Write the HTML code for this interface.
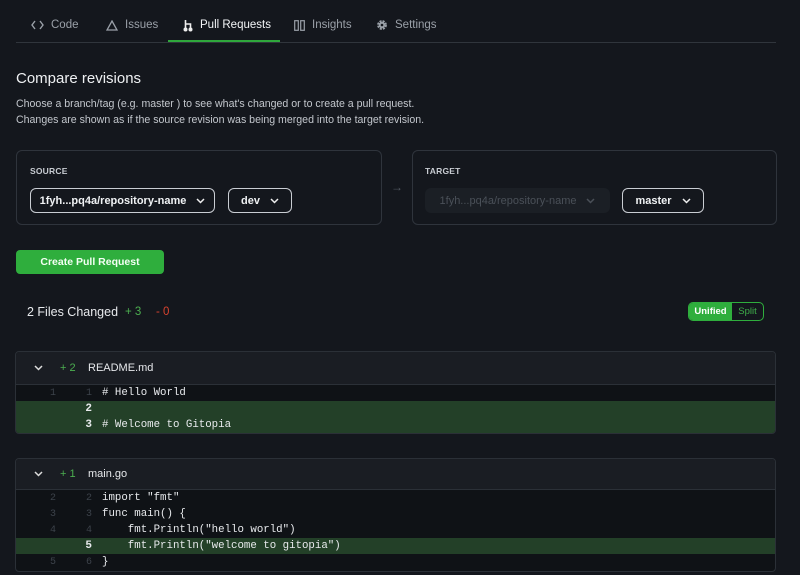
<!DOCTYPE html>
<html><head><meta charset="utf-8"><style>
*{margin:0;padding:0;box-sizing:border-box}
body{width:800px;height:575px;background:#14171d;color:#e6e8eb;font-family:"Liberation Sans",sans-serif;position:relative;overflow:hidden}
.a{position:absolute}
.tab{position:absolute;top:18px;font-size:11.5px;color:#9aa0a8;display:flex;align-items:center;gap:7px;height:14px}
.box{position:absolute;border:1px solid #2f343c;border-radius:6px}
.lbl{font-size:8.5px;font-weight:bold;color:#c8ccd2;letter-spacing:.2px}
.dd{position:absolute;height:25px;border:1px solid #c9cdd3;border-radius:6px;font-size:11px;font-weight:bold;display:flex;align-items:center;justify-content:center;gap:10px;color:#f0f2f4}
.file{position:absolute;left:15px;width:761px;border:1px solid #2b3037;border-radius:4px;overflow:hidden;background:#0f1216}
.fh{height:33px;background:#1a1d23;font-size:11px;display:flex;align-items:center;border-bottom:1px solid #2b3037}
.row{height:16px;font-family:"Liberation Mono",monospace;font-size:10.75px;display:flex;align-items:center;white-space:pre}
.row .o{width:40px;text-align:right;color:#3c424a;font-size:10px}
.row .n{width:36px;text-align:right;color:#3c424a;font-size:10px}
.row .c{padding-left:10px;color:#e8eaed}
.row.g{background:#234028}
.row.g .n{color:#e8eaed;font-size:11px;font-weight:bold}
</style></head><body>
<div class="tab" style="left:31px"><svg width="13" height="10" viewBox="0 0 13 10"><path d="M4 1L1 5L4 9M9 1L12 5L9 9" fill="none" stroke="#9aa0a8" stroke-width="1.4"/></svg>Code</div>
<div class="tab" style="left:106px"><svg width="12" height="11" viewBox="0 0 12 11"><path d="M6 1L11 10H1Z" fill="none" stroke="#9aa0a8" stroke-width="1.3"/></svg>Issues</div>
<div class="tab" style="left:183px;color:#f2f4f6"><svg width="10" height="13" viewBox="0 0 10 13"><circle cx="2.5" cy="10.5" r="2" fill="#eee"/><circle cx="7.5" cy="10.5" r="2" fill="#eee"/><path d="M2.5 1V9M2.5 5H7.5V9" stroke="#eee" stroke-width="1.6" fill="none"/></svg>Pull Requests</div>
<div class="tab" style="left:294px"><svg width="11" height="11" viewBox="0 0 11 11"><rect x=".7" y=".7" width="3.6" height="9.6" fill="none" stroke="#9aa0a8" stroke-width="1.2"/><rect x="6.7" y=".7" width="3.6" height="9.6" fill="none" stroke="#9aa0a8" stroke-width="1.2"/></svg>Insights</div>
<div class="tab" style="left:376px"><svg width="12" height="12" viewBox="0 0 12 12"><circle cx="6" cy="6" r="3.6" fill="none" stroke="#9aa0a8" stroke-width="2.6" stroke-dasharray="1.9 1"/><circle cx="6" cy="6" r="3.2" fill="#9aa0a8"/><circle cx="6" cy="6" r="1.3" fill="#14171d"/></svg>Settings</div>
<div class="a" style="left:16px;top:42px;width:760px;height:1px;background:#30353c"></div>
<div class="a" style="left:168px;top:40px;width:112px;height:2px;background:#2fa83c"></div>

<div class="a" style="left:16px;top:70px;font-size:15px;color:#eef0f2">Compare revisions</div>
<div class="a" style="left:16px;top:96px;font-size:10.6px;line-height:16px;color:#c3c7cd">Choose a branch/tag (e.g. master ) to see what's changed or to create a pull request.<br>Changes are shown as if the source revision was being merged into the target revision.</div>

<div class="box" style="left:16px;top:150px;width:366px;height:75px"></div>
<div class="a lbl" style="left:30px;top:166px">SOURCE</div>
<div class="dd" style="left:30px;top:188px;width:185px">1fyh...pq4a/repository-name <svg width="9" height="6" viewBox="0 0 9 6"><path d="M1 1L4.5 4.5L8 1" fill="none" stroke="#eee" stroke-width="1.5"/></svg></div>
<div class="dd" style="left:228px;top:188px;width:64px">dev <svg width="9" height="6" viewBox="0 0 9 6"><path d="M1 1L4.5 4.5L8 1" fill="none" stroke="#eee" stroke-width="1.5"/></svg></div>
<div class="a" style="left:391px;top:180px;color:#555b63;font-size:12px">→</div>
<div class="box" style="left:412px;top:150px;width:365px;height:75px"></div>
<div class="a lbl" style="left:425px;top:166px">TARGET</div>
<div class="dd" style="left:425px;top:188px;width:185px;border:none;background:#1b1f25;color:#4a5058;font-weight:normal">1fyh...pq4a/repository-name <svg width="9" height="6" viewBox="0 0 9 6"><path d="M1 1L4.5 4.5L8 1" fill="none" stroke="#4a5058" stroke-width="1.5"/></svg></div>
<div class="dd" style="left:622px;top:188px;width:82px">master <svg width="9" height="6" viewBox="0 0 9 6"><path d="M1 1L4.5 4.5L8 1" fill="none" stroke="#eee" stroke-width="1.5"/></svg></div>

<div class="a" style="left:16px;top:250px;width:148px;height:24px;background:#2fae3d;border-radius:4px;font-size:10.5px;font-weight:bold;color:#f4fff4;display:flex;align-items:center;justify-content:center">Create Pull Request</div>

<div class="a" style="left:27px;top:305px;font-size:12.5px;color:#e8eaed">2 Files Changed</div>
<div class="a" style="left:125px;top:306px;font-size:11.5px;color:#4caf50">+ 3</div>
<div class="a" style="left:156px;top:306px;font-size:11.5px;color:#d9432f">- 0</div>
<div class="a" style="left:688px;top:302px;width:76px;height:19px;border:1px solid #2fae3d;border-radius:5px;display:flex;overflow:hidden;font-size:9.5px;font-weight:bold">
<div style="width:43px;background:#2fae3d;color:#fff;display:flex;align-items:center;justify-content:center">Unified</div>
<div style="flex:1;color:#3fae4a;display:flex;align-items:center;justify-content:center;font-weight:normal">Split</div></div>

<div class="file" style="top:351px;height:83px">
<div class="fh"><span style="width:44px;display:flex;justify-content:center"><svg width="9" height="6" viewBox="0 0 9 6"><path d="M1 1L4.5 4.5L8 1" fill="none" stroke="#ddd" stroke-width="1.5"/></svg></span><span style="color:#4caf50;width:28px">+ 2</span>README.md</div>
<div class="row"><span class="o">1</span><span class="n">1</span><span class="c"># Hello World</span></div>
<div class="row g"><span class="o"></span><span class="n">2</span><span class="c"></span></div>
<div class="row g"><span class="o"></span><span class="n">3</span><span class="c"># Welcome to Gitopia</span></div>
</div>

<div class="file" style="top:458px;height:114px">
<div class="fh" style="height:31px"><span style="width:44px;display:flex;justify-content:center"><svg width="9" height="6" viewBox="0 0 9 6"><path d="M1 1L4.5 4.5L8 1" fill="none" stroke="#ddd" stroke-width="1.5"/></svg></span><span style="color:#4caf50;width:28px">+ 1</span>main.go</div>
<div class="row"><span class="o">2</span><span class="n">2</span><span class="c">import "fmt"</span></div>
<div class="row"><span class="o">3</span><span class="n">3</span><span class="c">func main() {</span></div>
<div class="row"><span class="o">4</span><span class="n">4</span><span class="c">    fmt.Println("hello world")</span></div>
<div class="row g"><span class="o"></span><span class="n">5</span><span class="c">    fmt.Println("welcome to gitopia")</span></div>
<div class="row"><span class="o">5</span><span class="n">6</span><span class="c">}</span></div>
</div>
</body></html>
